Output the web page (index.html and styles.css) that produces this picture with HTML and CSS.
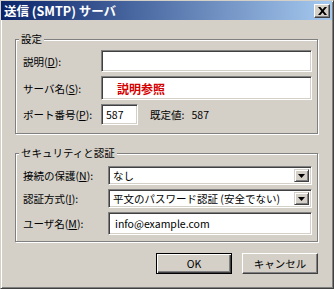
FILE: index.html
```html
<!doctype html>
<html lang="ja">
  <head>
    <meta charset="UTF-8" />
    <title>送信 (SMTP) サーバ</title>
    <link rel="stylesheet" href="styles.css">
  </head>
  <body>
    <div class="window">
      <div class="titlebar">
        <span class="title">送信 (SMTP) サーバ</span>
        <span class="close-btn">
          <svg width="9" height="8" viewBox="0 0 9 8"><path d="M0 0h2.4l2.1 2.6L6.6 0H9L5.7 4 9 8H6.6L4.5 5.4 2.4 8H0l3.3-4z" fill="#000"/></svg>
        </span>
      </div>

      <div class="dialog">
        <fieldset class="group group-settings">
          <legend>設定</legend>
          <div class="form">
            <label>説明(<u>D</u>):</label>
            <div class="field"></div>

            <label>サーバ名(<u>S</u>):</label>
            <div class="field field-note">説明参照</div>

            <label>ポート番号(<u>P</u>):</label>
            <div class="port-row">
              <div class="field field-port">587</div>
              <span class="default-value">既定値:&nbsp;&nbsp;&nbsp;587</span>
            </div>
          </div>
        </fieldset>

        <fieldset class="group group-security">
          <legend>セキュリティと認証</legend>
          <div class="form">
            <label>接続の保護(<u>N</u>):</label>
            <div class="field combo">
              <span class="combo-text">なし</span>
              <span class="combo-btn"><svg width="7" height="4" viewBox="0 0 7 4"><path d="M0 0h7L3.5 4z" fill="#000"/></svg></span>
            </div>

            <label>認証方式(<u>I</u>):</label>
            <div class="field combo">
              <span class="combo-text">平文のパスワード認証 (安全でない)</span>
              <span class="combo-btn"><svg width="7" height="4" viewBox="0 0 7 4"><path d="M0 0h7L3.5 4z" fill="#000"/></svg></span>
            </div>

            <label>ユーザ名(<u>M</u>):</label>
            <div class="field field-user">info@example.com</div>
          </div>
        </fieldset>

        <div class="buttons">
          <button class="btn btn-default">OK</button>
          <button class="btn">キャンセル</button>
        </div>
      </div>
    </div>
  </body>
</html>
```

FILE: styles.css
```css
* {
  box-sizing: border-box;
}
body {
  margin: 0;
  font-family: "Noto Sans CJK JP", "Liberation Sans", sans-serif;
  font-size: 10.5px;
  color: #000;
  background-color: #d4d0c8;
}
.window {
  width: 334px;
  height: 289px;
  background-color: #d4d0c8;
  border: 1px solid;
  border-color: #d4d0c8 #404040 #404040 #d4d0c8;
  box-shadow: inset 1px 1px #fff, inset -1px -1px #808080;
  display: flex;
  flex-direction: column;
}
.titlebar {
  height: 19px;
  margin-right: 1px;
  display: flex;
  align-items: center;
  justify-content: space-between;
  padding: 0 2px 0 3px;
  background: linear-gradient(to right, #0a246a, #a6caf0);
  color: #fff;
  font-weight: bold;
  font-size: 12.5px;
}
.close-btn {
  width: 16px;
  height: 14px;
  display: flex;
  align-items: center;
  justify-content: center;
  background-color: #d4d0c8;
  border: 1px solid;
  border-color: #fff #404040 #404040 #fff;
  box-shadow: inset -1px -1px #808080;
}
.dialog {
  padding: 13px 15px 0 14px;
}
.group {
  margin: 0;
  border: 1px solid #808080;
  box-shadow: 1px 1px #fff, inset 1px 1px #fff;
  padding: 5px 5px 8px 7px;
}
.group legend {
  margin-left: -4px;
  padding: 0 2px;
  line-height: 12px;
  background-color: #d4d0c8;
}
.form {
  display: grid;
  row-gap: 4px;
  align-items: center;
}
.group-settings .form {
  grid-template-columns: 78px 1fr;
  grid-template-rows: 22px 24px 21px;
}
.group-security {
  margin-top: 13px;
  padding-top: 7px;
  padding-bottom: 6px;
}
.group-security .form {
  grid-template-columns: 85px 1fr;
  grid-template-rows: 19px 19px 23px;
}
label {
  white-space: nowrap;
}
.field {
  height: 100%;
  display: flex;
  align-items: center;
  padding-left: 4px;
  background-color: #fff;
  border: 1px solid;
  border-color: #808080 #fff #fff #808080;
  box-shadow: inset 1px 1px #404040, inset -1px -1px #d4d0c8;
  white-space: nowrap;
}
.field-note {
  padding-left: 15px;
  color: #d40000;
  font-weight: bold;
  font-size: 12px;
}
.port-row {
  height: 100%;
  display: flex;
  align-items: center;
  gap: 12px;
}
.field-port {
  width: 37px;
}
.field-user {
  padding-left: 6px;
}
.combo {
  padding: 2px 2px 2px 4px;
  justify-content: space-between;
}
.combo-btn {
  width: 15px;
  height: 100%;
  display: flex;
  align-items: center;
  justify-content: center;
  background-color: #d4d0c8;
  border: 1px solid;
  border-color: #d4d0c8 #404040 #404040 #d4d0c8;
  box-shadow: inset 1px 1px #fff, inset -1px -1px #808080;
}
.buttons {
  display: flex;
  justify-content: flex-end;
  gap: 10px;
  margin-top: 11px;
}
.btn {
  width: 76px;
  height: 21px;
  padding: 0;
  font-family: inherit;
  font-size: 10.5px;
  color: #000;
  background-color: #d4d0c8;
  border: 1px solid;
  border-color: #fff #404040 #404040 #fff;
  box-shadow: inset -1px -1px #808080;
}
.btn-default {
  border-color: #000;
  box-shadow: inset 1px 1px #fff, inset -1px -1px #404040, inset -2px -2px #808080;
}
```
